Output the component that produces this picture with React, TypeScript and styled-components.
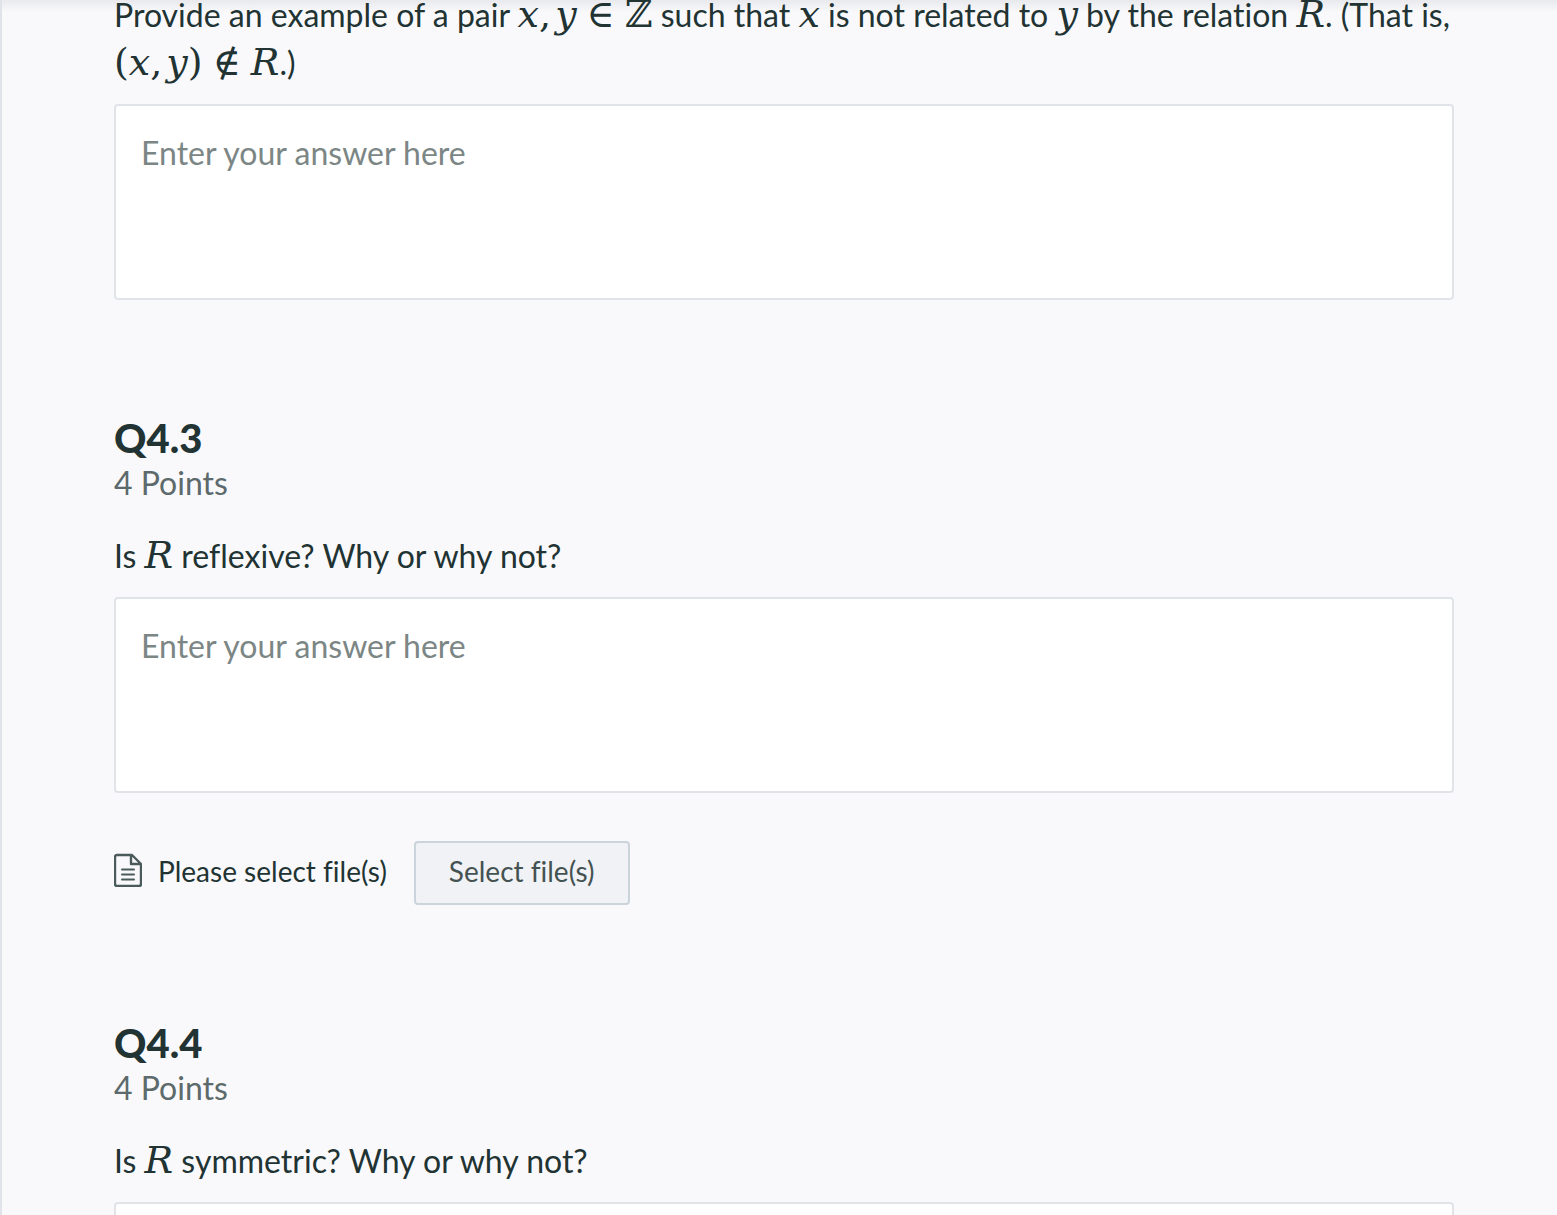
import React, { useRef } from "react";
import styled, { createGlobalStyle } from "styled-components";

const GlobalStyle = createGlobalStyle`
  *, *::before, *::after { box-sizing: border-box; }
  body {
    margin: 0;
    background: #f9f9fc;
    color: #213332;
    font-family: Lato, "Open Sans", sans-serif;
    font-size: 32px;
    font-variant-ligatures: none;
    line-height: 48px;
  }
`;

const Viewport = styled.div`
  position: relative;
  height: 100vh;
  overflow: hidden;
  border-left: 2px solid #e0e4ea;
`;

const HeaderShadow = styled.div`
  position: absolute;
  inset: 0 0 auto 0;
  height: 12px;
  background: linear-gradient(rgba(40, 50, 60, 0.08), rgba(40, 50, 60, 0));
  pointer-events: none;
`;

const Content = styled.main`
  margin-top: -9px;
  padding: 0 103px 0 112px;
`;

const Question = styled.section`
  margin-bottom: 116px;
`;

const Title = styled.h2`
  margin: 0;
  font-size: 40px;
  font-weight: 900;
  line-height: 44px;
`;

const Points = styled.p`
  margin: 0 0 26px;
  line-height: 46px;
  color: #5d6a6b;
`;

const Prompt = styled.label`
  display: block;
  margin-bottom: 17px;
`;

const MathText = styled.span`
  font-family: "DejaVu Serif", serif;
  font-size: 38px;
  line-height: 1;
  white-space: nowrap;
`;

const Var = styled.i`
  font-style: italic;
`;

const Rel = styled.span`
  margin: 0 10px;
`;

const Comma = styled.span`
  margin-right: 4px;
`;

const Answer = styled.textarea`
  display: block;
  width: 100%;
  height: 196px;
  padding: 23px 25px;
  border: 2px solid #e0e3e8;
  border-radius: 4px;
  background: #fff;
  color: inherit;
  font: inherit;
  resize: none;

  &::placeholder {
    color: #7b8685;
    opacity: 1;
  }
`;

const FileRow = styled.div`
  display: flex;
  align-items: center;
  margin-top: 48px;
  font-size: 28px;
`;

const FileIcon = styled.svg`
  width: 28px;
  height: 34px;
  margin: 0 16px 6px 0;
  fill: none;
  stroke: #4b5a5a;
  stroke-width: 2;
`;

const FileLabel = styled.span`
  padding-bottom: 4px;
`;

const FileButton = styled.button`
  height: 64px;
  margin-left: 27px;
  padding: 0 33px 4px;
  border: 2px solid #cbd3db;
  border-radius: 4px;
  background: #f0f2f6;
  color: #455252;
  font: inherit;
  cursor: pointer;
`;

function FilePicker() {
  const input = useRef<HTMLInputElement>(null);
  return (
    <FileRow>
      <FileIcon viewBox="0 0 28 34" aria-hidden="true">
        <path
          d="M3 2H18L27 11V31Q27 33 25 33H3Q1 33 1 31V4Q1 2 3 2Z M17 2V11H27"
          strokeWidth="2.4"
          strokeLinejoin="round"
        />
        <path d="M8 16.5H20 M8 21.5H20 M8 26.5H20" strokeLinecap="round" />
      </FileIcon>
      <FileLabel>Please select file(s)</FileLabel>
      <FileButton type="button" onClick={() => input.current?.click()}>
        Select file(s)
      </FileButton>
      <input ref={input} type="file" multiple hidden />
    </FileRow>
  );
}

interface QuestionBlockProps {
  id: string;
  title?: string;
  points?: number;
  files?: boolean;
  children: React.ReactNode;
}

function QuestionBlock({ id, title, points, files, children }: QuestionBlockProps) {
  return (
    <Question>
      {title && <Title>{title}</Title>}
      {points && <Points>{points} Points</Points>}
      <Prompt htmlFor={id}>{children}</Prompt>
      <Answer id={id} placeholder="Enter your answer here" />
      {files && <FilePicker />}
    </Question>
  );
}

const X = () => <MathText><Var>x</Var></MathText>;
const Y = () => <MathText><Var>y</Var></MathText>;
const R = () => <MathText><Var>R</Var></MathText>;

export default function App() {
  return (
    <>
      <GlobalStyle />
      <Viewport>
        <Content>
          <QuestionBlock id="q4-2">
            Provide an example of a pair{" "}
            <MathText>
              <Var>x</Var><Comma>,</Comma><Var>y</Var><Rel>∈</Rel>ℤ
            </MathText>{" "}
            such that <X /> is not related to <Y /> by the relation <R />. (That is,{" "}
            <MathText>
              (<Var>x</Var><Comma>,</Comma><Var>y</Var>)<Rel>∉</Rel><Var>R</Var>
            </MathText>
            .)
          </QuestionBlock>
          <QuestionBlock id="q4-3" title="Q4.3" points={4} files>
            Is <R /> reflexive? Why or why not?
          </QuestionBlock>
          <QuestionBlock id="q4-4" title="Q4.4" points={4}>
            Is <R /> symmetric? Why or why not?
          </QuestionBlock>
        </Content>
        <HeaderShadow />
      </Viewport>
    </>
  );
}
